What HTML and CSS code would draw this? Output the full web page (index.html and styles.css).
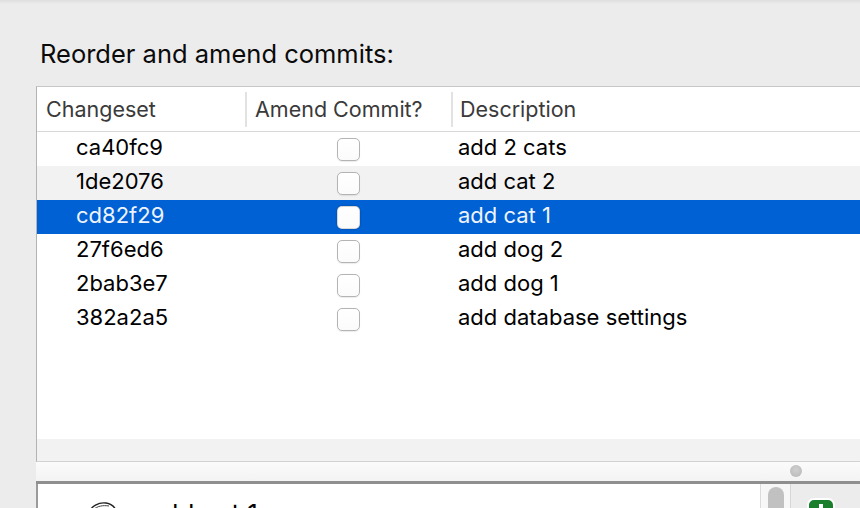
FILE: index.html
```html
<!DOCTYPE html>
<html>
<head>
<meta charset="utf-8">
<link rel="stylesheet" href="styles.css">
</head>
<body>
<div class="topedge"></div>
<h1 class="title">Reorder and amend commits:</h1>
<div class="table">
  <div class="thead">
    <div class="th c1">Changeset</div>
    <div class="th c2">Amend Commit?</div>
    <div class="th c3">Description</div>
  </div>
  <div class="tbody">
    <div class="row"><div class="td c1">ca40fc9</div><div class="td c2"><span class="box"></span></div><div class="td c3">add 2 cats</div></div>
    <div class="row alt"><div class="td c1">1de2076</div><div class="td c2"><span class="box"></span></div><div class="td c3">add cat 2</div></div>
    <div class="row sel"><div class="td c1">cd82f29</div><div class="td c2"><span class="box"></span></div><div class="td c3">add cat 1</div></div>
    <div class="row"><div class="td c1">27f6ed6</div><div class="td c2"><span class="box"></span></div><div class="td c3">add dog 2</div></div>
    <div class="row"><div class="td c1">2bab3e7</div><div class="td c2"><span class="box"></span></div><div class="td c3">add dog 1</div></div>
    <div class="row"><div class="td c1">382a2a5</div><div class="td c2"><span class="box"></span></div><div class="td c3">add database settings</div></div>
  </div>
  <div class="hscroll"></div>
</div>
<div class="splitter"><span class="grip"></span></div>
<div class="lower">
  <div class="preview">
    <svg class="avatar" width="34" height="12" viewBox="0 0 34 12"><path d="M3 12 C6 4 14 0 21 1 C27 2 31 6 32 12" fill="none" stroke="#222" stroke-width="1.4"/><path d="M8 8 C12 4 18 3 24 4" fill="none" stroke="#444" stroke-width="1"/></svg>
    <span class="ptext">add cat 1</span>
  </div>
  <div class="vscroll"><span class="thumb"></span></div>
  <div class="side"><span class="plus"></span></div>
</div>
</body>
</html>
```
FILE: styles.css
```css
html, body {
  margin: 0;
  padding: 0;
  height: 508px;
  overflow: hidden;
}
body {
  background: #ececec;
  font-family: Inter, "Liberation Sans", sans-serif;
  color: #000;
}
.topedge {
  height: 4px;
  background: linear-gradient(#dedede, #ececec);
}
.title {
  margin: 0;
  padding: 35px 0 17px 40px;
  height: 30px;
  font-size: 25.5px;
  font-weight: 400;
  line-height: 30px;
  color: #0a0a0a;
}
.table {
  margin-left: 36px;
  height: 374px;
  background: #fff;
  border-top: 1px solid #c6c6c6;
  border-left: 1px solid #b3b3b3;
  border-bottom: 1px solid #d2d2d2;
  display: flex;
  flex-direction: column;
}
.thead {
  display: flex;
  height: 44px;
  border-bottom: 1px solid #d8d8d8;
  align-items: center;
}
.th {
  font-size: 21.5px;
  color: #3a3a3a;
  height: 35px;
  line-height: 34px;
  box-sizing: border-box;
}
.th.c1 { width: 208px; padding-left: 9px; }
.th.c2 { width: 206px; padding-left: 8px; border-left: 2px solid #e2e2e2; }
.th.c3 { flex: 1; padding-left: 7px; border-left: 2px solid #e2e2e2; }
.tbody {
  flex: 1;
}
.row {
  display: flex;
  height: 34px;
  align-items: center;
  font-size: 22px;
}
.row.alt { background: #f2f2f2; }
.row.sel { background: #0061d4; color: #eef3fc; }
.td.c1, .td.c3 { padding-bottom: 4px; }
.td.c1 { width: 208px; padding-left: 39px; box-sizing: border-box; }
.td.c2 { width: 206px; display: flex; justify-content: center; box-sizing: border-box; }
.td.c3 { flex: 1; padding-left: 7px; }
.box {
  width: 23px;
  height: 23px;
  box-sizing: border-box;
  border: 1px solid #b4b4b4;
  border-radius: 5px;
  background: linear-gradient(#fff, #fbfbfb);
  box-shadow: 0 0.5px 1px rgba(0,0,0,0.08);
}
.row.sel .box {
  border-color: rgba(0,0,0,0.15);
  box-shadow: 0 0 2px rgba(0,0,0,0.35);
}
.hscroll {
  height: 22px;
  background: #f2f2f2;
}
.splitter {
  margin-left: 36px;
  height: 19px;
  background: linear-gradient(#fbfbfb, #f3f3f3);
  border-bottom: 3px solid #8f8f8f;
  position: relative;
}
.grip {
  position: absolute;
  left: 754px;
  top: 3px;
  width: 12px;
  height: 12px;
  border-radius: 50%;
  background: radial-gradient(circle at 50% 40%, #d0d0d0, #b6b6b6);
}
.lower {
  margin-left: 36px;
  height: 30px;
  display: flex;
  border-left: 2px solid #9a9a9a;
}
.preview {
  width: 722px;
  background: #fff;
  position: relative;
  overflow: hidden;
}
.avatar {
  position: absolute;
  left: 47px;
  top: 18px;
}
.ptext {
  position: absolute;
  left: 110px;
  top: 15px;
  font-size: 26px;
  line-height: 30px;
  color: #000;
}
.vscroll {
  width: 29px;
  background: #f7f7f7;
  border-left: 1px solid #dcdcdc;
  border-right: 1px solid #d6d6d6;
  position: relative;
}
.thumb {
  position: absolute;
  left: 7px;
  top: 3px;
  width: 16px;
  height: 40px;
  border-radius: 8px;
  background: #c1c1c1;
}
.side {
  flex: 1;
  background: #ececec;
  position: relative;
}
.plus {
  position: absolute;
  left: 16px;
  top: 14px;
  width: 28px;
  height: 28px;
  border-radius: 7px;
  background: #1a7f2d;
  border: 2px solid #fff;
  box-sizing: border-box;
}
.plus::before {
  content: "";
  position: absolute;
  left: 10px;
  top: 4px;
  width: 4px;
  height: 16px;
  background: #fff;
}
```
